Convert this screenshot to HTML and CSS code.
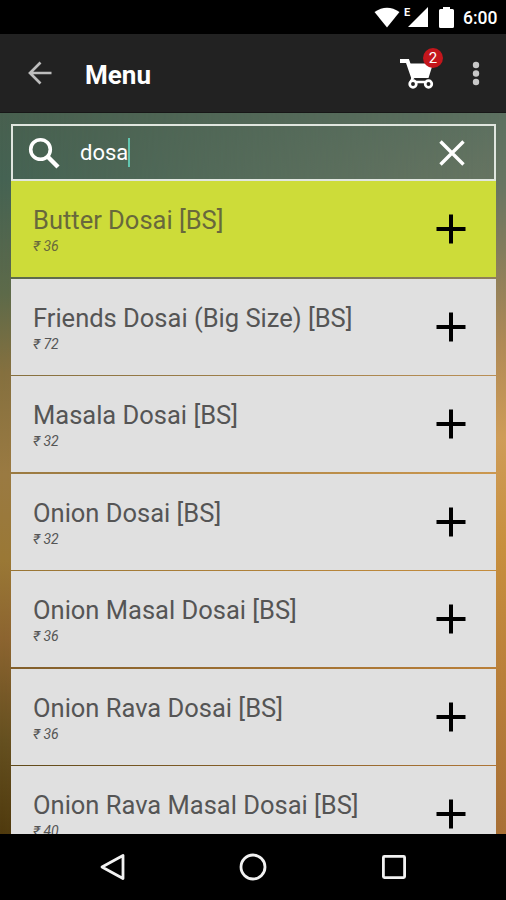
FILE: index.html
```html
<!DOCTYPE html>
<html lang="en">
<head>
<meta charset="utf-8">
<title>Menu</title>
<link rel="stylesheet" href="styles.css">
</head>
<body>
<div class="phone">
  <div class="status">
    <svg class="wifi" viewBox="0 0 26 21"><path d="M0.5 5Q13-3.500 25.500 5L13 20.500Z" fill="#fff"/></svg>
    <span class="edge">E</span>
    <svg class="signal" viewBox="0 0 20 20"><path d="M20 0V20H0Z" fill="#fff"/></svg>
    <svg class="battery" viewBox="0 0 15 21"><path d="M4 0H11V2H13.500Q15 2 15 3.500V19.500Q15 21 13.500 21H1.500Q0 21 0 19.500V3.500Q0 2 1.500 2H4Z" fill="#fff"/></svg>
    <span class="clock">6:00</span>
  </div>
  <header class="toolbar">
    <svg class="back" viewBox="0 0 24 24"><path d="M23.500 12H2M12.500 1.500L2 12L12.500 22.500" fill="none" stroke="#bdbdbd" stroke-width="2.700"/></svg>
    <h1 class="title">Menu</h1>
    <div class="cart">
      <svg viewBox="0 0 36 31"><path d="M1 3H8.500L14.500 20.500" fill="none" stroke="#fff" stroke-width="4"/><path d="M9.500 5.500H34L29.500 20H14.500Z" fill="#fff"/><path d="M14 19L12 24H30" fill="none" stroke="#fff" stroke-width="2.500"/><circle cx="14" cy="26" r="3.300" fill="#222" stroke="#fff" stroke-width="2.700"/><circle cx="29.500" cy="26" r="3.300" fill="#222" stroke="#fff" stroke-width="2.700"/></svg>
      <span class="badge">2</span>
    </div>
    <svg class="more" viewBox="0 0 8 25"><g fill="#c8c8c8"><circle cx="4" cy="4" r="3.200"/><circle cx="4" cy="12.500" r="3.200"/><circle cx="4" cy="21" r="3.200"/></g></svg>
  </header>
  <main class="content">
    <div class="search">
      <svg class="magnifier" viewBox="0 0 32 32"><circle cx="12.500" cy="12.500" r="9.800" fill="none" stroke="#fff" stroke-width="3.600"/><path d="M19.500 19.500L30 30" stroke="#fff" stroke-width="4.400"/></svg>
      <span class="query">dosa</span><span class="caret"></span>
      <svg class="clear" viewBox="0 0 26 26"><path d="M1.500 1.500L24.500 24.500M24.500 1.500L1.500 24.500" stroke="#fff" stroke-width="3.400"/></svg>
    </div>
    <ul class="list">
      <li class="item selected"><div><div class="name">Butter Dosai [BS]</div><div class="price">₹ 36</div></div><svg class="plus" viewBox="0 0 30 30"><path d="M15 .5V29.500M.5 15H29.500" stroke="#000" stroke-width="4"/></svg></li>
      <li class="item"><div><div class="name">Friends Dosai (Big Size) [BS]</div><div class="price">₹ 72</div></div><svg class="plus" viewBox="0 0 30 30"><path d="M15 .5V29.500M.5 15H29.500" stroke="#000" stroke-width="4"/></svg></li>
      <li class="item"><div><div class="name">Masala Dosai [BS]</div><div class="price">₹ 32</div></div><svg class="plus" viewBox="0 0 30 30"><path d="M15 .5V29.500M.5 15H29.500" stroke="#000" stroke-width="4"/></svg></li>
      <li class="item"><div><div class="name">Onion Dosai [BS]</div><div class="price">₹ 32</div></div><svg class="plus" viewBox="0 0 30 30"><path d="M15 .5V29.500M.5 15H29.500" stroke="#000" stroke-width="4"/></svg></li>
      <li class="item"><div><div class="name">Onion Masal Dosai [BS]</div><div class="price">₹ 36</div></div><svg class="plus" viewBox="0 0 30 30"><path d="M15 .5V29.500M.5 15H29.500" stroke="#000" stroke-width="4"/></svg></li>
      <li class="item"><div><div class="name">Onion Rava Dosai [BS]</div><div class="price">₹ 36</div></div><svg class="plus" viewBox="0 0 30 30"><path d="M15 .5V29.500M.5 15H29.500" stroke="#000" stroke-width="4"/></svg></li>
      <li class="item"><div><div class="name">Onion Rava Masal Dosai [BS]</div><div class="price">₹ 40</div></div><svg class="plus" viewBox="0 0 30 30"><path d="M15 .5V29.500M.5 15H29.500" stroke="#000" stroke-width="4"/></svg></li>
    </ul>
  </main>
  <nav class="navbar">
    <svg viewBox="0 0 28 28"><path d="M24 2.500V25.500L3 14Z" fill="none" stroke="#f2f2f2" stroke-width="2.800" stroke-linejoin="round"/></svg>
    <svg viewBox="0 0 28 28"><circle cx="14" cy="14" r="12" fill="none" stroke="#f2f2f2" stroke-width="2.800"/></svg>
    <svg viewBox="0 0 28 28"><rect x="3.400" y="3.400" width="21.200" height="21.200" rx="1" fill="none" stroke="#f2f2f2" stroke-width="2.800"/></svg>
  </nav>
</div>
</body>
</html>
```
FILE: styles.css
```css
* { box-sizing: border-box; }
body { margin: 0; background: #000; font-family: Roboto, "Liberation Sans", sans-serif; }
svg { display: block; flex: none; }
.phone { width: 506px; height: 900px; display: flex; flex-direction: column; overflow: hidden; }

.status { height: 34px; flex: none; display: flex; align-items: flex-start; padding: 7px 0 0 374px; color: #fff; }
.wifi { width: 26px; height: 21px; }
.edge { width: 8px; margin-left: 4px; font-size: 11px; line-height: 11px; font-weight: 700; }
.signal { width: 20px; height: 20px; margin-left: -4px; }
.battery { width: 15px; height: 21px; margin-left: 11px; }
.clock { margin-left: 9px; font-size: 17.5px; line-height: 22px; font-weight: 500; }

.toolbar { height: 79px; flex: none; display: flex; align-items: center; background: #222; border-bottom: 1px solid #171717; padding-left: 28px; }
.back { width: 24px; height: 24px; }
.title { margin: 4px 0 0 33px; width: 281px; font-size: 26px; line-height: 32px; font-weight: 700; color: #fff; }
.cart { position: relative; width: 36px; margin-left: 33px; }
.cart svg { width: 36px; height: 31px; }
.badge { position: absolute; left: 24px; top: -10px; width: 20px; height: 20px; border-radius: 50%; background: #c4161c; color: #fff; font-size: 15px; line-height: 20px; text-align: center; }
.more { width: 8px; height: 25px; margin-left: 37px; }

.content { position: relative; flex: none; height: 721px; padding: 11px 10px 0 11px; overflow: hidden; isolation: isolate;
  background: linear-gradient(#48604f, #456353 9%, #5d6a4a 25%, #85703f 36%, #9a7a42 50%, #9a7836 62%, #8c6430 73%, #655020 87%, #4f3a0e); }
.content::before { content: ""; position: absolute; inset: 0; z-index: -1;
  background: linear-gradient(#5c7060, #687562 10%, #847c5c 19%, #b08a56 32%, #cf9d58 45%, #c8903e 60%, #ba803a 78%, #a97036);
  -webkit-mask-image: linear-gradient(90deg, transparent, #000); mask-image: linear-gradient(90deg, transparent, #000); }
.search { height: 57px; display: flex; align-items: center; border: 2px solid #e0e6df; padding-left: 15px; }
.magnifier { width: 32px; height: 32px; }
.query { margin-left: 20px; font-size: 22px; line-height: 30px; color: #fff; }
.caret { width: 2px; height: 29px; background: #62c5b0; }
.clear { width: 26px; height: 26px; margin-left: auto; margin-right: 29px; }
.list { list-style: none; margin: 0; padding: 0; display: flex; flex-direction: column; gap: 1.5px; }
.item { height: 96px; flex: none; display: flex; justify-content: space-between; padding: 24px 30px 0 22px; background: #e0e0e0; color: #555; }
.selected { background: #cddc39; color: #68683c; }
.name { font-size: 25.5px; line-height: 31px; white-space: nowrap; }
.price { font-size: 14px; line-height: 20px; font-style: italic; }
.plus { width: 30px; height: 30px; margin-top: 9px; }

.navbar { height: 66px; display: flex; justify-content: center; align-items: center; gap: 112.5px; background: #000; }
.navbar svg { width: 28px; height: 28px; }
```
